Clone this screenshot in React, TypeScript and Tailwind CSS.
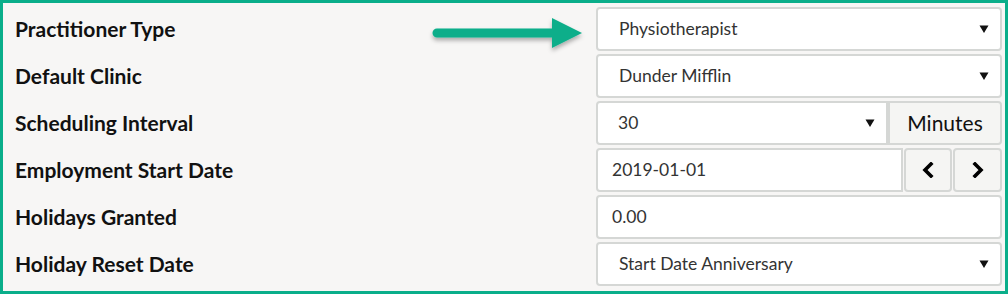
import React from "react";

const font = { fontFamily: "Lato, 'Noto Sans', sans-serif" };

function Caret() {
  return (
    <svg width="10" height="10" viewBox="0 0 10 10" className="shrink-0">
      <path d="M0.5 1.5 L9.5 1.5 L5 9 Z" fill="#111" />
    </svg>
  );
}

function Chevron({ dir }: { dir: "left" | "right" }) {
  const d = dir === "left" ? "M10 2 L4 8 L10 14" : "M5 2 L11 8 L5 14";
  return (
    <svg width="15" height="16" viewBox="0 0 15 16">
      <path d={d} fill="none" stroke="#000" strokeWidth="3.6" strokeLinecap="square" strokeLinejoin="miter" />
    </svg>
  );
}

function SelectBox({ value, className = "rounded" }: { value: string; className?: string }) {
  return (
    <div className={`flex h-full flex-1 items-center justify-between border-2 border-[#d5d7d5] bg-white pl-[21px] pr-[11px] text-[17.5px] text-[#333] ${className}`}>
      <span>{value}</span>
      <Caret />
    </div>
  );
}

function TextBox({ value, className = "rounded" }: { value: string; className?: string }) {
  return (
    <div className={`flex h-full flex-1 items-center border-2 border-[#d5d7d5] bg-white pl-[14px] text-[17.5px] text-[#333] ${className}`}>
      {value}
    </div>
  );
}

function Row({ label, children }: { label: string; children: React.ReactNode }) {
  return (
    <div className="grid h-[44px] grid-cols-[593px_1fr]">
      <div className="flex items-center pl-[12px] text-[21px] font-bold text-[#111]">{label}</div>
      <div className="flex h-full">{children}</div>
    </div>
  );
}

export default function App() {
  return (
    <div
      className="relative h-[294px] w-[1008px] border-[3px] border-[#0aae8a] bg-[#f7f6f5] pb-[5px] pr-[3px] pt-[4px]"
      style={font}
    >
      <div className="flex flex-col gap-[3px]">
        <Row label="Practitioner Type">
          <SelectBox value="Physiotherapist" />
        </Row>
        <Row label="Default Clinic">
          <SelectBox value="Dunder Mifflin" />
        </Row>
        <Row label="Scheduling Interval">
          <div className="flex h-full flex-1">
            <div className="flex h-full w-[292px] items-center justify-between rounded-l border-2 border-[#d5d7d5] bg-white pl-[20px] pr-[11px] text-[17.5px] text-[#333]">
              <span>30</span>
              <Caret />
            </div>
            <div className="flex h-full flex-1 items-center justify-center rounded-r border-2 border-[#d5d7d5] bg-[#f5f5f3] text-[21px] text-[#111]">
              Minutes
            </div>
          </div>
        </Row>
        <Row label="Employment Start Date">
          <div className="flex h-full flex-1 gap-[1px]">
            <TextBox value="2019-01-01" className="rounded-l" />
            <div className="flex h-full w-[48px] items-center justify-center rounded border-2 border-[#d5d7d5] bg-[#f5f5f3]">
              <Chevron dir="left" />
            </div>
            <div className="flex h-full w-[49px] items-center justify-center rounded border-2 border-[#d5d7d5] bg-[#f5f5f3]">
              <Chevron dir="right" />
            </div>
          </div>
        </Row>
        <Row label="Holidays Granted">
          <TextBox value="0.00" />
        </Row>
        <Row label="Holiday Reset Date">
          <SelectBox value="Start Date Anniversary" />
        </Row>
      </div>

      {/* pointer arrow */}
      <svg
        className="absolute left-[425px] top-[10px]"
        width="160"
        height="42"
        viewBox="0 0 160 42"
      >
        <defs>
          <filter id="sh" x="-10%" y="-30%" width="120%" height="180%">
            <feDropShadow dx="0" dy="3" stdDeviation="2" floodColor="#000" floodOpacity="0.3" />
          </filter>
        </defs>
        <g filter="url(#sh)">
          <path d="M9 15.5 L124 15.5 L124 5 L154 20 L124 35 L124 24.5 L9 24.5 A4.5 4.5 0 0 1 9 15.5 Z" fill="#0aae8a" />
        </g>
      </svg>
    </div>
  );
}
